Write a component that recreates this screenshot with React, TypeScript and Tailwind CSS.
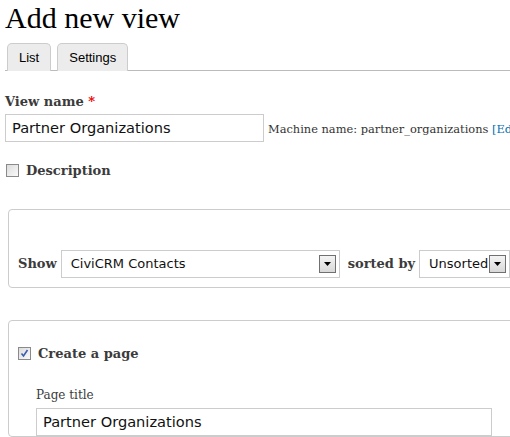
import React from 'react';

const serif = 'font-["DejaVu_Serif",serif]';
const sans = 'font-["DejaVu_Sans",sans-serif]';

function Arrow() {
    return (
        <span className="flex h-[18px] w-[17px] items-center justify-center border border-[#707070] bg-gradient-to-b from-[#f4f4f4] to-[#d8d8d8]">
            <svg width="7" height="4" viewBox="0 0 7 4">
                <path d="M0 0h7L3.5 4z" fill="#000" />
            </svg>
        </span>
    );
}

function Select({ value, width }: { value: string; width: string }) {
    return (
        <div className={`flex h-[28px] ${width} shrink-0 items-center justify-between border border-[#ccc] bg-white pl-[9px] pr-[3px]`}>
            <span className={`${sans} text-[13px] text-[#111]`}>{value}</span>
            <Arrow />
        </div>
    );
}

function Checkbox({ checked }: { checked?: boolean }) {
    return (
        <span className="flex h-[13px] w-[13px] shrink-0 items-center justify-center border border-[#8a8a8a] bg-gradient-to-br from-[#dcdcdc] to-[#fafafa]">
            {checked && (
                <svg width="9" height="9" viewBox="0 0 9 9">
                    <path d="M1.5 4.5l2 2.5 4-6" stroke="#3a5fb0" strokeWidth="1.6" fill="none" />
                </svg>
            )}
        </span>
    );
}

const tab = 'font-["Liberation_Sans",sans-serif] -mb-px rounded-t-[5px] border border-[#ccc] border-b-0 bg-[#ececec] px-[11px] pt-[6px] pb-[6px] text-[13px] leading-[15px] text-black';

export default function App() {
    return (
        <div className="w-[510px] h-[437px] overflow-hidden bg-white pl-[5px]">
            <h1 className={"font-['Liberation_Serif','Times_New_Roman',serif] text-[30px] leading-[34px] text-black pt-[1px]"}>Add new view</h1>

            <div className="mt-[8px] flex gap-[6px] border-b border-[#bbb] pl-[2px]">
                <span className={tab}>List</span>
                <span className={tab}>Settings</span>
            </div>

            <div className={`${serif} mt-[23px] text-[13px] leading-[16px] font-bold text-[#3b3b3b]`}>
                View name <span className="text-[#e00]">*</span>
            </div>
            <div className="mt-[4px] flex items-center gap-[4px]">
                <div className={`${sans} flex h-[28px] w-[259px] shrink-0 items-center border border-[#ccc] pl-[6px] text-[14.6px] text-[#111]`}>
                    Partner Organizations
                </div>
                <span className={`${serif} whitespace-nowrap pt-[3px] text-[11.4px] text-[#333]`}>
                    Machine name: partner_organizations <span className="text-[#0071b3]">[Edit]</span>
                </span>
            </div>

            <div className="mt-[19px] flex items-center gap-[7px] pl-[1px]">
                <Checkbox />
                <span className={`${serif} text-[13px] font-bold text-[#3b3b3b]`}>Description</span>
            </div>

            <div className="mt-[28px] ml-[3px] w-[540px] rounded-[4px] border border-[#ccc] pt-[40px] pb-[9px] pl-[9px]">
                <div className="flex items-center gap-[4px]">
                    <span className={`${serif} text-[13px] font-bold text-[#3b3b3b]`}>Show</span>
                    <Select value="CiviCRM Contacts" width="w-[279px]" />
                    <span className={`${serif} ml-[4px] text-[13px] font-bold text-[#3b3b3b]`}>sorted by</span>
                    <Select value="Unsorted" width="w-[91px]" />
                </div>
            </div>

            <div className="mt-[32px] ml-[3px] w-[540px] rounded-[4px] border border-[#ccc] pt-[23px] pl-[9px]">
                <div className="flex items-center gap-[7px]">
                    <Checkbox checked />
                    <span className={`${serif} text-[13px] font-bold text-[#3b3b3b]`}>Create a page</span>
                </div>
                <div className="pl-[18px]">
                    <div className={`${serif} mt-[24px] text-[12px] leading-[16px] text-[#3b3b3b]`}>Page title</div>
                    <div className={`${sans} mt-[5px] flex h-[28px] w-[456px] items-center border border-[#ccc] pl-[6px] text-[14.6px] text-[#111]`}>
                        Partner Organizations
                    </div>
                </div>
            </div>
        </div>
    );
}
